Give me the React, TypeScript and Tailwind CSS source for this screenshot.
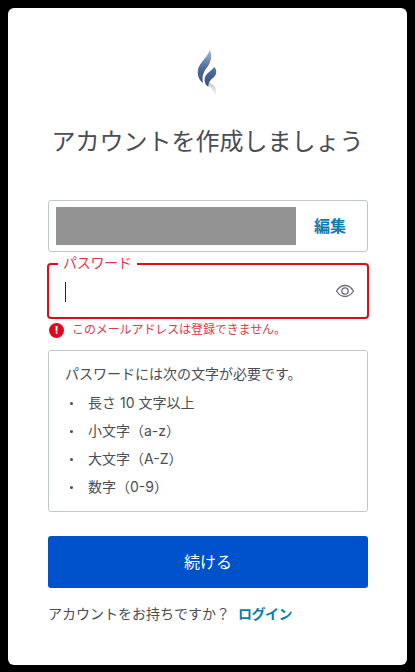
import React from 'react';

const font = { fontFamily: 'Inter, "Noto Sans CJK JP", sans-serif' };

const Logo = () => (
  <svg width="24" height="48" viewBox="0 0 24 48" fill="none">
    <defs>
      <linearGradient id="flame" x1="14" y1="0" x2="8" y2="40" gradientUnits="userSpaceOnUse">
        <stop offset="0" stopColor="#a9bfdc" />
        <stop offset="0.45" stopColor="#54709f" />
        <stop offset="1" stopColor="#2f4a7c" />
      </linearGradient>
      <linearGradient id="smoke" x1="16" y1="30" x2="18" y2="46" gradientUnits="userSpaceOnUse">
        <stop offset="0" stopColor="#bdbdbd" />
        <stop offset="1" stopColor="#f2f2f2" />
      </linearGradient>
    </defs>
    <path d="M12 33 C17 35 21 38 20 42 C20 44 19.500 46 18.500 47 C18 42 15 38 11 35 Z" fill="url(#smoke)" />
    <path d="M14 1 C16 6 15.500 12 12 17 C8 22 5.500 27 7 34 C3 31 1 26 2 21 C3 14 10 10 14 1 Z" fill="url(#flame)" />
    <path d="M18 18 C21 20 21 25 18 28 C14 31 12 34 12.500 38 C9 36 7.500 31 9.500 27 C11.500 23 16 22 18 18 Z" fill="url(#flame)" />
  </svg>
);

const App = () => {
  return (
    <div className="h-[672px] w-[415px] overflow-hidden bg-black pt-2 pl-2" style={font}>
      <div className="flex h-[657px] w-[399px] flex-col rounded-[6px] bg-white pt-[41px] pr-[39px] pl-10">
        <div className="flex justify-center">
          <Logo />
        </div>
        <h1 className="mt-[27px] -ml-px whitespace-nowrap text-center text-[24px] leading-[36px] font-normal text-[#4a4d55]">
          アカウントを作成しましょう
        </h1>
        <div className="mt-[40px] flex h-[52px] items-center rounded-[3px] border border-[#c1c7d0] pl-[7px]">
          <div className="h-[38px] w-[240px] bg-[#939393]" />
          <span className="ml-[18px] text-[16px] font-semibold text-[#0b7cab]">編集</span>
        </div>
        <div className="relative -mx-px mt-[11px] flex h-[56px] items-center justify-between rounded-[4px] border-2 border-[#de0a1e] pr-[12px] pl-[16px]">
          <span className="absolute -top-[11px] left-[9px] bg-white px-[5px] text-[14px] leading-[18px] tracking-[-0.3px] text-[#de3a4a]">
            パスワード
          </span>
          <div className="mt-[1px] h-[20px] w-px bg-[#172b4d]" />
          <svg width="20" height="20" viewBox="0 0 20 20" fill="none" stroke="#6b6f76" strokeWidth="1.300">
            <path d="M1.500 10 C4 6 7 4.500 10 4.500 C13 4.500 16 6 18.500 10 C16 14 13 15.500 10 15.500 C7 15.500 4 14 1.500 10 Z" />
            <circle cx="10" cy="10" r="3.200" />
          </svg>
        </div>
        <div className="mt-[1px] flex h-[20px] items-center pl-px">
          <div className="flex h-[15px] w-[15px] items-center justify-center rounded-full bg-[#de0a1e] text-[11px] leading-none font-bold text-white">
            !
          </div>
          <span className="ml-[8px] text-[12px] tracking-[-0.1px] text-[#de3a4a]">このメールアドレスは登録できません。</span>
        </div>
        <div className="mt-[10px] h-[162px] rounded-[3px] border border-[#c1c7d0] pt-[9px] pl-[16px] text-[14px] leading-[28px] text-[#4a4d55]">
          <p className="mb-px">パスワードには次の文字が必要です。</p>
          <ul>
            {['長さ 10 文字以上', '小文字（a-z）', '大文字（A-Z）', '数字（0-9）'].map((item) => (
              <li key={item} className="flex items-center">
                <span className="ml-[5px] h-[3px] w-[3px] rounded-full bg-[#4a4d55]" />
                <span className="ml-[15px]">{item}</span>
              </li>
            ))}
          </ul>
        </div>
        <button className="mt-[24px] h-[52px] rounded-[3px] bg-[#0052cc] pb-px text-[16px] text-white">続ける</button>
        <div className="mt-[16px] flex items-center text-[14px] leading-[20px] text-[#4a4d55]">
          <span>アカウントをお持ちですか？</span>
          <span className="ml-[8px] font-semibold tracking-[-0.5px] text-[#0b7cab]">ログイン</span>
        </div>
      </div>
    </div>
  );
};

export default App;
